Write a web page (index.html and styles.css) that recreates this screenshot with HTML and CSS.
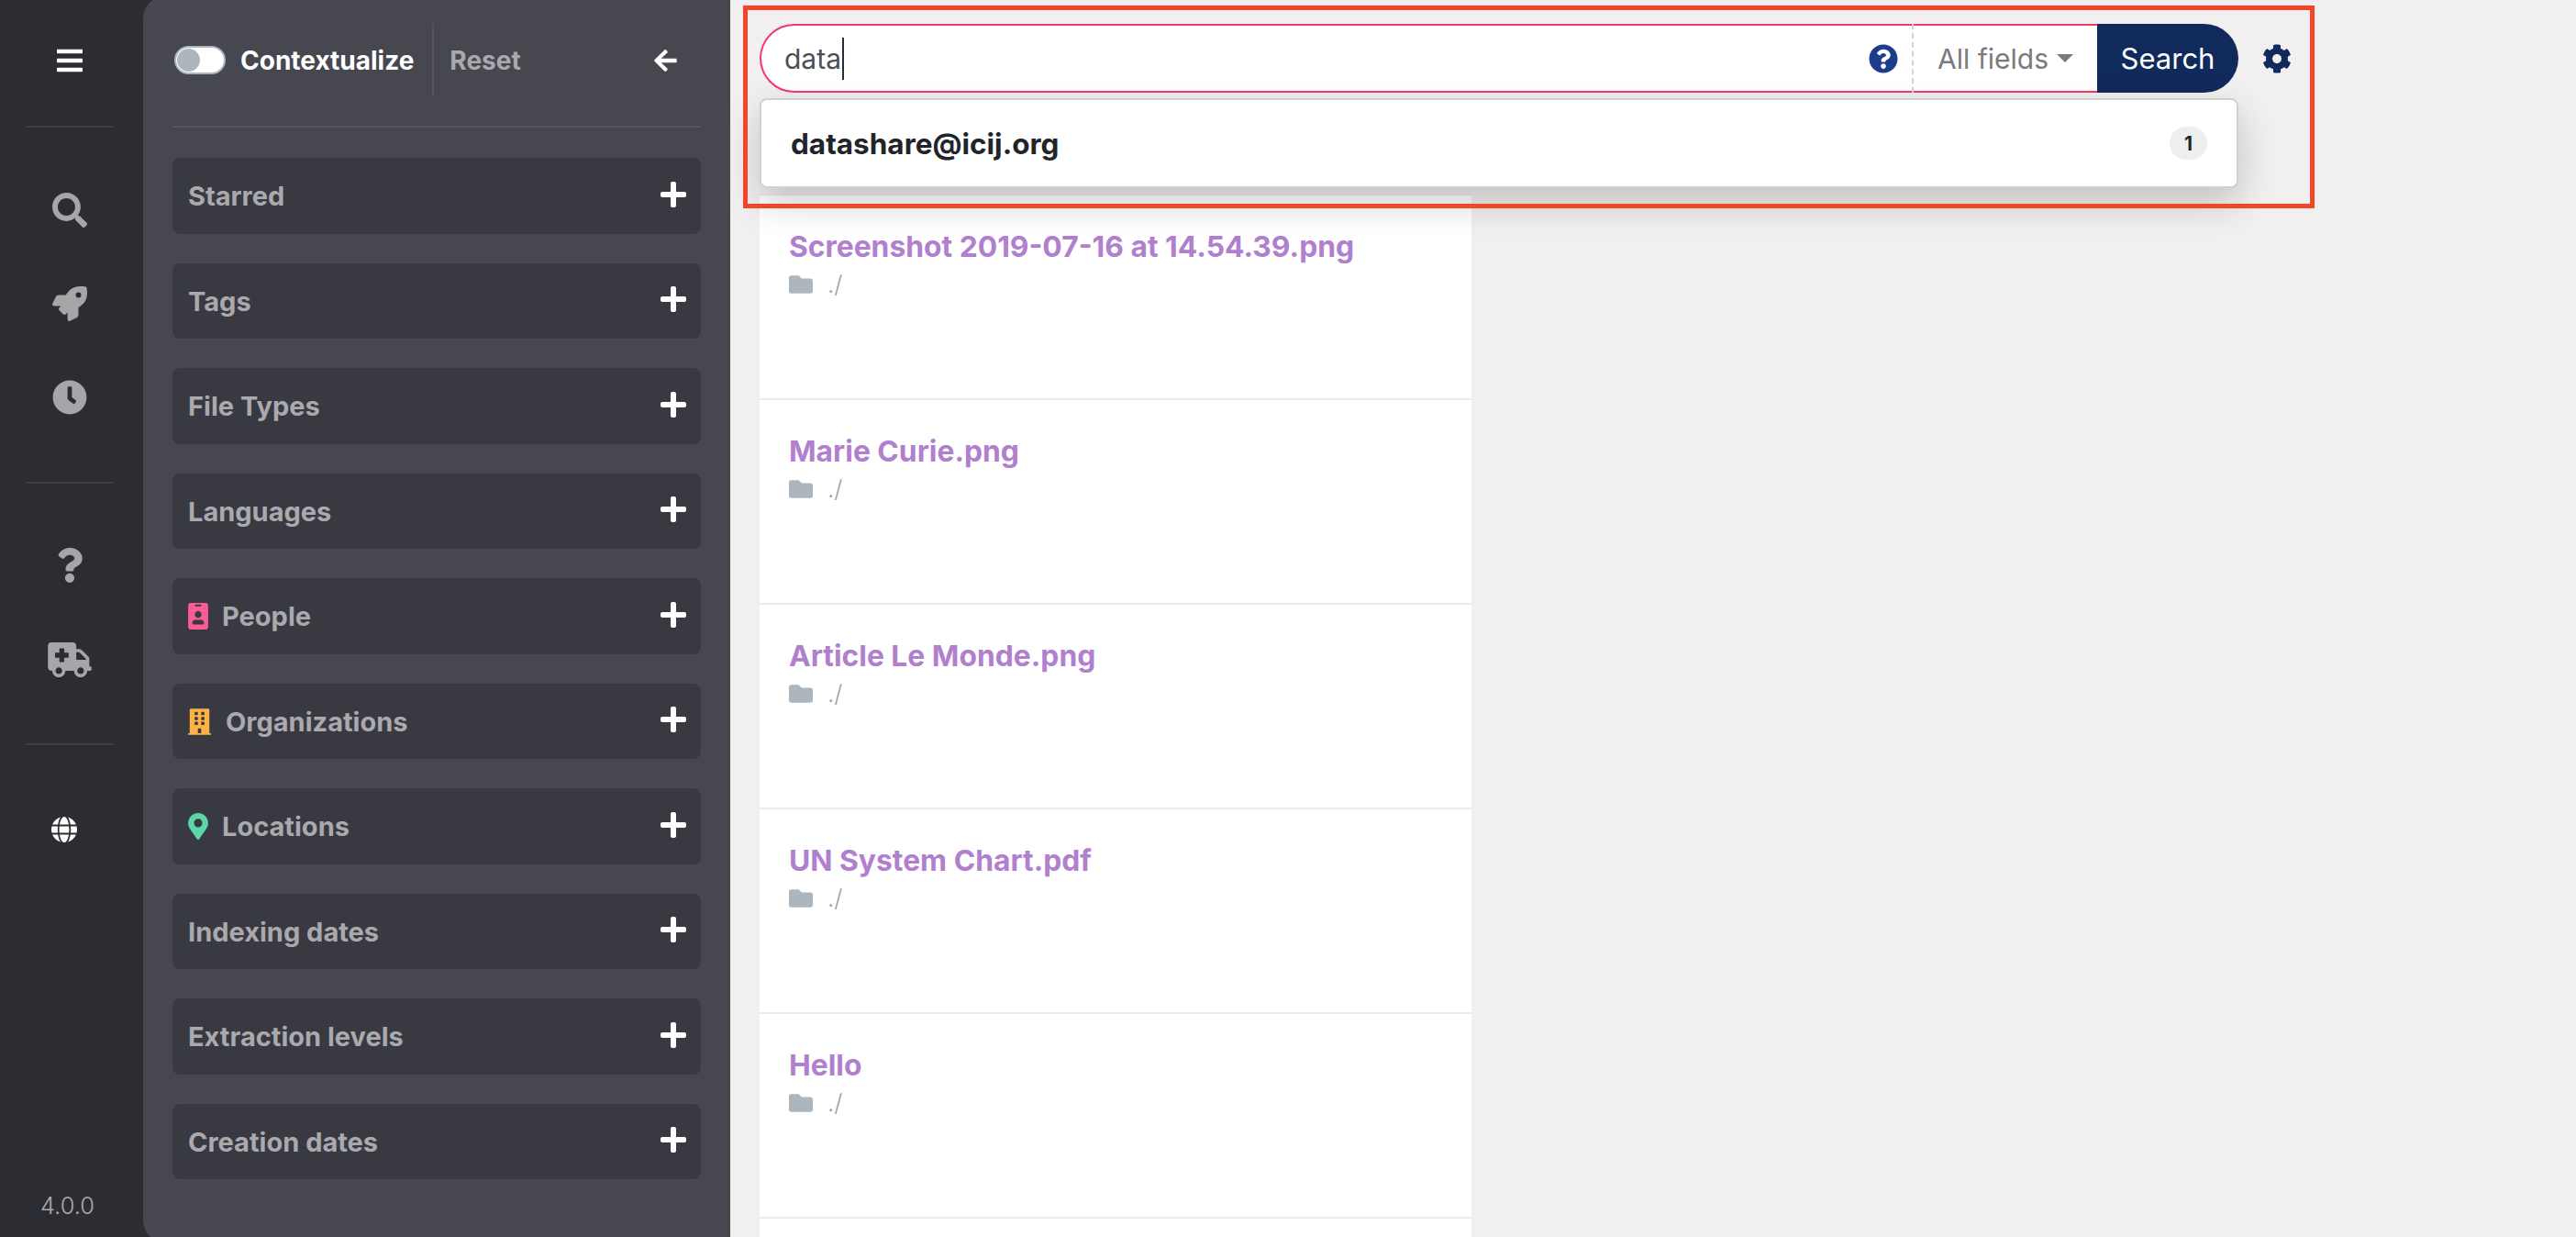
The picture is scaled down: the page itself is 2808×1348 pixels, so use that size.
FILE: index.html
```html
<!DOCTYPE html>
<html lang="en">

<head>
	<meta charset="UTF-8">
	<title>Datashare</title>
	<link rel="stylesheet" href="styles.css">
</head>

<body>
	<svg class="sprites" xmlns="http://www.w3.org/2000/svg">
		<symbol id="i-bars" viewBox="0 0 448 512"><path d="M16 132h416c8.837 0 16-7.163 16-16V76c0-8.837-7.163-16-16-16H16C7.163 60 0 67.163 0 76v40c0 8.837 7.163 16 16 16zm0 160h416c8.837 0 16-7.163 16-16v-40c0-8.837-7.163-16-16-16H16c-8.837 0-16 7.163-16 16v40c0 8.837 7.163 16 16 16zm0 160h416c8.837 0 16-7.163 16-16v-40c0-8.837-7.163-16-16-16H16c-8.837 0-16 7.163-16 16v40c0 8.837 7.163 16 16 16z"/></symbol>
		<symbol id="i-search" viewBox="0 0 512 512"><path d="M505 442.7L405.3 343c-4.5-4.5-10.6-7-17-7H372c27.6-35.3 44-79.7 44-128C416 93.1 322.9 0 208 0S0 93.1 0 208s93.1 208 208 208c48.3 0 92.7-16.4 128-44v16.3c0 6.4 2.5 12.5 7 17l99.7 99.7c9.4 9.4 24.6 9.4 33.9 0l28.3-28.3c9.4-9.4 9.4-24.6.1-34zM208 336c-70.7 0-128-57.2-128-128 0-70.7 57.2-128 128-128 70.7 0 128 57.2 128 128 0 70.7-57.2 128-128 128z"/></symbol>
		<symbol id="i-rocket" viewBox="0 0 512 512"><path d="M505.12019,19.09375c-1.18945-5.53125-6.65819-11-12.207-12.1875C460.716,0,435.507,0,410.40747,0,307.17523,0,245.26909,55.20312,199.05238,128H94.83772c-16.34763.01562-35.55658,11.875-42.88664,26.48438L2.51562,253.29688A28.4,28.4,0,0,0,0,264a24.00867,24.00867,0,0,0,24.00582,24H127.81618l-22.47457,22.46875c-11.36521,11.36133-12.99607,32.25781,0,45.25L156.24582,406.625c11.15623,11.1875,32.15619,13.15625,45.27726,0l22.47457-22.46875V488a24.00867,24.00867,0,0,0,24.00581,24,28.55934,28.55934,0,0,0,10.707-2.51562l98.72834-49.39063c14.62888-7.29687,26.50776-26.5,26.50776-42.85937V312.79688c72.59753-46.3125,128.03493-108.40626,128.03493-211.09376C512.07526,76.5,512.07526,51.29688,505.12019,19.09375ZM384.04033,168A40,40,0,1,1,424.05,128,40.02322,40.02322,0,0,1,384.04033,168Z"/></symbol>
		<symbol id="i-clock" viewBox="0 0 512 512"><path d="M256,8C119,8,8,119,8,256S119,504,256,504,504,393,504,256,393,8,256,8Zm92.49,313h0l-20,25a16,16,0,0,1-22.49,2.5h0l-67-49.72a40,40,0,0,1-15-31.23V112a16,16,0,0,1,16-16h32a16,16,0,0,1,16,16V256l58,42.5A16,16,0,0,1,348.49,321Z"/></symbol>
		<symbol id="i-question" viewBox="0 0 384 512"><path d="M202.021 0C122.202 0 70.503 32.703 29.914 91.026c-7.363 10.58-5.093 25.086 5.178 32.874l43.138 32.709c10.373 7.865 25.132 6.026 33.253-4.148 25.049-31.381 43.63-49.449 82.757-49.449 30.764 0 68.816 19.799 68.816 49.631 0 22.552-18.617 34.134-48.993 51.164-35.423 19.86-82.299 44.576-82.299 106.405V320c0 13.255 10.745 24 24 24h72.471c13.255 0 24-10.745 24-24v-5.773c0-42.86 125.268-44.645 125.268-160.627C377.504 66.256 286.902 0 202.021 0zM192 373.459c-38.196 0-69.271 31.075-69.271 69.271 0 38.195 31.075 69.27 69.271 69.27s69.271-31.075 69.271-69.271-31.075-69.27-69.271-69.27z"/></symbol>
		<symbol id="i-ambulance" viewBox="0 0 640 512"><path d="M624 352h-16V243.9c0-12.7-5.1-24.9-14.1-33.9L494 110.1c-9-9-21.2-14.1-33.9-14.1H416V48c0-26.5-21.5-48-48-48H48C21.5 0 0 21.5 0 48v320c0 26.5 21.5 48 48 48h16c0 53 43 96 96 96s96-43 96-96h128c0 53 43 96 96 96s96-43 96-96h48c8.8 0 16-7.2 16-16v-32c0-8.8-7.2-16-16-16zM160 464c-26.5 0-48-21.5-48-48s21.5-48 48-48 48 21.5 48 48-21.5 48-48 48zm144-248c0 4.4-3.6 8-8 8h-56v56c0 4.4-3.6 8-8 8h-56c-4.4 0-8-3.6-8-8v-56h-56c-4.4 0-8-3.6-8-8v-56c0-4.4 3.6-8 8-8h56v-56c0-4.4 3.6-8 8-8h56c4.4 0 8 3.6 8 8v56h56c4.4 0 8 3.6 8 8v56zm176 248c-26.5 0-48-21.5-48-48s21.5-48 48-48 48 21.5 48 48-21.5 48-48 48zm80-208H416V144h44.1l99.9 99.9V256z"/></symbol>
		<symbol id="i-globe" viewBox="0 0 496 512"><path d="M336.5 160C322 70.7 287.8 8 248 8s-74 62.7-88.5 152h177zM152 256c0 22.2 1.2 43.5 3.3 64h185.3c2.1-20.5 3.3-41.8 3.3-64s-1.2-43.5-3.3-64H155.3c-2.1 20.5-3.3 41.8-3.3 64zm324.7-96c-28.6-67.9-86.5-120.4-158-141.6 24.4 33.8 41.2 84.7 50 141.6h108zM177.2 18.4C105.8 39.6 47.8 92.1 19.3 160h108c8.7-56.9 25.5-107.8 49.9-141.6zM487.4 192H372.7c2.1 21 3.3 42.5 3.3 64s-1.2 43-3.3 64h114.6c5.5-20.5 8.6-41.8 8.6-64s-3.1-43.5-8.5-64zM120 256c0-21.5 1.2-43 3.3-64H8.6C3.2 212.5 0 233.8 0 256s3.2 43.5 8.6 64h114.6c-2-21-3.2-42.5-3.2-64zm39.5 96c14.5 89.3 48.7 152 88.5 152s74-62.7 88.5-152h-177zm159.3 141.6c71.4-21.2 129.4-73.7 158-141.6h-108c-8.8 56.9-25.6 107.8-50 141.6zM19.3 352c28.6 67.9 86.5 120.4 158 141.6-24.4-33.8-41.2-84.7-50-141.6h-108z"/></symbol>
		<symbol id="i-arrow" viewBox="0 0 448 512"><path d="M257.5 445.1l-22.2 22.2c-9.4 9.4-24.6 9.4-33.9 0L7 273c-9.4-9.4-9.4-24.6 0-33.9L201.4 44.7c9.4-9.4 24.6-9.4 33.9 0l22.2 22.2c9.5 9.5 9.3 25-.4 34.3L136.6 216H424c13.3 0 24 10.7 24 24v32c0 13.3-10.7 24-24 24H136.6l120.5 114.8c9.8 9.3 10 24.8.4 34.3z"/></symbol>
		<symbol id="i-plus" viewBox="0 0 448 512"><path d="M416 208H272V64c0-17.67-14.33-32-32-32h-32c-17.67 0-32 14.33-32 32v144H32c-17.67 0-32 14.33-32 32v32c0 17.67 14.33 32 32 32h144v144c0 17.67 14.33 32 32 32h32c17.67 0 32-14.33 32-32V304h144c17.67 0 32-14.33 32-32v-32c0-17.67-14.33-32-32-32z"/></symbol>
		<symbol id="i-badge" viewBox="0 0 384 512"><path d="M336 0H48C21.5 0 0 21.5 0 48v416c0 26.5 21.5 48 48 48h288c26.5 0 48-21.5 48-48V48c0-26.5-21.5-48-48-48zM144 32h96c8.8 0 16 7.2 16 16s-7.2 16-16 16h-96c-8.8 0-16-7.2-16-16s7.2-16 16-16zm48 128c35.3 0 64 28.7 64 64s-28.7 64-64 64-64-28.7-64-64 28.7-64 64-64zm112 236.8c0 10.6-10 19.2-22.4 19.2H102.4C90 416 80 407.4 80 396.8v-19.2c0-31.8 30.1-57.6 67.2-57.6h5c12.3 5.1 25.7 8 39.8 8s27.6-2.9 39.8-8h5c37.1 0 67.2 25.8 67.2 57.6v19.2z"/></symbol>
		<symbol id="i-building" viewBox="0 0 448 512"><path d="M436 480h-20V24c0-13.255-10.745-24-24-24H56C42.745 0 32 10.745 32 24v456H12c-6.627 0-12 5.373-12 12v20h448v-20c0-6.627-5.373-12-12-12zM128 76c0-6.627 5.373-12 12-12h40c6.627 0 12 5.373 12 12v40c0 6.627-5.373 12-12 12h-40c-6.627 0-12-5.373-12-12V76zm0 96c0-6.627 5.373-12 12-12h40c6.627 0 12 5.373 12 12v40c0 6.627-5.373 12-12 12h-40c-6.627 0-12-5.373-12-12v-40zm52 148h-40c-6.627 0-12-5.373-12-12v-40c0-6.627 5.373-12 12-12h40c6.627 0 12 5.373 12 12v40c0 6.627-5.373 12-12 12zm76 160h-64v-84c0-6.627 5.373-12 12-12h40c6.627 0 12 5.373 12 12v84zm64-172c0 6.627-5.373 12-12 12h-40c-6.627 0-12-5.373-12-12v-40c0-6.627 5.373-12 12-12h40c6.627 0 12 5.373 12 12v40zm0-96c0 6.627-5.373 12-12 12h-40c-6.627 0-12-5.373-12-12v-40c0-6.627 5.373-12 12-12h40c6.627 0 12 5.373 12 12v40zm0-96c0 6.627-5.373 12-12 12h-40c-6.627 0-12-5.373-12-12V76c0-6.627 5.373-12 12-12h40c6.627 0 12 5.373 12 12v40z"/></symbol>
		<symbol id="i-marker" viewBox="0 0 384 512"><path d="M172.268 501.67C26.97 291.031 0 268.413 0 192 0 85.961 85.961 0 192 0s192 85.961 192 192c0 76.413-26.97 99.031-172.268 309.67-9.535 13.774-29.93 13.773-39.464 0zM192 272c44.183 0 80-35.817 80-80s-35.817-80-80-80-80 35.817-80 80 35.817 80 80 80z"/></symbol>
		<symbol id="i-folder" viewBox="0 0 512 512"><path d="M464 128H272l-64-64H48C21.49 64 0 85.49 0 112v288c0 26.51 21.49 48 48 48h416c26.51 0 48-21.49 48-48V176c0-26.51-21.49-48-48-48z"/></symbol>
		<symbol id="i-help" viewBox="0 0 512 512"><path d="M504 256c0 136.997-111.043 248-248 248S8 392.997 8 256C8 119.083 119.043 8 256 8s248 111.083 248 248zM262.655 90c-54.497 0-89.255 22.957-116.549 63.758-3.536 5.286-2.353 12.415 2.715 16.258l34.699 26.31c5.205 3.947 12.621 3.008 16.665-2.122 17.864-22.658 30.113-35.797 57.303-35.797 20.429 0 45.698 13.148 45.698 32.958 0 14.976-12.363 22.667-32.534 33.976C247.128 238.528 216 254.941 216 296v4c0 6.627 5.373 12 12 12h56c6.627 0 12-5.373 12-12v-1.333c0-28.462 83.186-29.647 83.186-106.667 0-58.002-60.165-102-116.531-102zM256 338c-25.365 0-46 20.635-46 46 0 25.364 20.635 46 46 46s46-20.636 46-46c0-25.365-20.635-46-46-46z"/></symbol>
		<symbol id="i-cog" viewBox="0 0 512 512"><path d="M487.4 315.7l-42.6-24.6c4.3-23.2 4.3-47 0-70.2l42.6-24.6c4.9-2.8 7.1-8.6 5.5-14-11.1-35.6-30-67.8-54.7-94.6-3.8-4.1-10-5.1-14.8-2.3L380.8 110c-17.9-15.4-38.5-27.3-60.8-35.1V25.8c0-5.6-3.9-10.5-9.4-11.7-36.7-8.2-74.3-7.8-109.2 0-5.5 1.2-9.4 6.1-9.4 11.7V75c-22.2 7.9-42.8 19.8-60.8 35.1L88.7 85.5c-4.9-2.8-11-1.9-14.8 2.3-24.7 26.7-43.6 58.9-54.7 94.6-1.7 5.4.6 11.2 5.5 14L67.3 221c-4.3 23.2-4.3 47 0 70.2l-42.6 24.6c-4.9 2.8-7.1 8.6-5.5 14 11.1 35.6 30 67.8 54.7 94.6 3.8 4.1 10 5.1 14.8 2.3l42.6-24.6c17.9 15.4 38.5 27.3 60.8 35.1v49.2c0 5.6 3.9 10.5 9.4 11.7 36.7 8.2 74.3 7.8 109.2 0 5.5-1.2 9.4-6.1 9.4-11.7v-49.2c22.2-7.9 42.8-19.8 60.8-35.1l42.6 24.6c4.9 2.8 11 1.9 14.8-2.3 24.7-26.7 43.6-58.9 54.7-94.6 1.5-5.5-.7-11.3-5.6-14.1zM256 336c-44.1 0-80-35.9-80-80s35.9-80 80-80 80 35.9 80 80-35.9 80-80 80z"/></symbol>
	</svg>

	<nav class="rail">
		<div class="rail-group rail-top">
			<svg class="rail-bars"><use href="#i-bars"/></svg>
		</div>
		<div class="rail-group rail-main">
			<svg class="rail-icon"><use href="#i-search"/></svg>
			<svg class="rail-icon"><use href="#i-rocket"/></svg>
			<svg class="rail-icon"><use href="#i-clock"/></svg>
		</div>
		<div class="rail-group rail-help">
			<svg class="rail-icon"><use href="#i-question"/></svg>
			<svg class="rail-icon rail-ambulance"><use href="#i-ambulance"/></svg>
		</div>
		<div class="rail-lang">
			<svg class="rail-globe"><use href="#i-globe"/></svg>
		</div>
		<div class="rail-version">4.0.0</div>
	</nav>

	<aside class="panel">
		<div class="panel-head">
			<span class="toggle"><span class="toggle-knob"></span></span>
			<span class="context-label">Contextualize</span>
			<span class="reset">Reset</span>
			<svg class="back"><use href="#i-arrow"/></svg>
		</div>
		<div class="filters">
			<div class="filter"><span>Starred</span><svg class="plus"><use href="#i-plus"/></svg></div>
			<div class="filter"><span>Tags</span><svg class="plus"><use href="#i-plus"/></svg></div>
			<div class="filter"><span>File Types</span><svg class="plus"><use href="#i-plus"/></svg></div>
			<div class="filter"><span>Languages</span><svg class="plus"><use href="#i-plus"/></svg></div>
			<div class="filter"><svg class="ftype ftype-person"><use href="#i-badge"/></svg><span>People</span><svg class="plus"><use href="#i-plus"/></svg></div>
			<div class="filter"><svg class="ftype ftype-org"><use href="#i-building"/></svg><span>Organizations</span><svg class="plus"><use href="#i-plus"/></svg></div>
			<div class="filter"><svg class="ftype ftype-loc"><use href="#i-marker"/></svg><span>Locations</span><svg class="plus"><use href="#i-plus"/></svg></div>
			<div class="filter"><span>Indexing dates</span><svg class="plus"><use href="#i-plus"/></svg></div>
			<div class="filter"><span>Extraction levels</span><svg class="plus"><use href="#i-plus"/></svg></div>
			<div class="filter"><span>Creation dates</span><svg class="plus"><use href="#i-plus"/></svg></div>
		</div>
	</aside>

	<main class="content">
		<div class="search-row">
			<div class="search-box">
				<div class="search-input"><span class="typed">data</span></div>
				<svg class="help"><use href="#i-help"/></svg>
				<div class="field-select">All fields<span class="caret"></span></div>
			</div>
			<div class="search-btn">Search</div>
			<svg class="settings"><use href="#i-cog"/></svg>
		</div>

		<div class="results">
			<div class="result">
				<div class="result-title">Screenshot 2019-07-16 at 14.54.39.png</div>
				<div class="result-path"><svg class="folder"><use href="#i-folder"/></svg>./</div>
			</div>
			<div class="result">
				<div class="result-title">Marie Curie.png</div>
				<div class="result-path"><svg class="folder"><use href="#i-folder"/></svg>./</div>
			</div>
			<div class="result">
				<div class="result-title">Article Le Monde.png</div>
				<div class="result-path"><svg class="folder"><use href="#i-folder"/></svg>./</div>
			</div>
			<div class="result">
				<div class="result-title">UN System Chart.pdf</div>
				<div class="result-path"><svg class="folder"><use href="#i-folder"/></svg>./</div>
			</div>
			<div class="result">
				<div class="result-title">Hello</div>
				<div class="result-path"><svg class="folder"><use href="#i-folder"/></svg>./</div>
			</div>
		</div>

		<div class="suggestions">
			<span class="suggestion-text">datashare@icij.org</span>
			<span class="suggestion-count">1</span>
		</div>
	</main>

	<div class="highlight"></div>
</body>
</html>
```

FILE: styles.css
```css
* {
	box-sizing: border-box;
}

html, body {
	height: 100%;
}

body {
	margin: 0;
	display: flex;
	overflow: hidden;
	font-family: Inter, "Liberation Sans", sans-serif;
	background-color: #f2eff0;
}

.sprites {
	display: none;
}

svg {
	fill: currentColor;
	flex: none;
}

/* left rail */
.rail {
	width: 156px;
	flex: none;
	padding-right: 4px;
	display: flex;
	flex-direction: column;
	align-items: center;
	background-color: #2c2d32;
	color: #a6a6a9;
}

.rail-group {
	width: 96px;
	display: flex;
	flex-direction: column;
	align-items: center;
	border-bottom: 2px solid #3f4046;
}

.rail-top {
	height: 139px;
	padding-top: 50px;
}

.rail-bars {
	width: 28px;
	height: 32px;
	color: #fff;
}

.rail-main {
	height: 388px;
	padding-top: 71px;
	gap: 64px;
}

.rail-help {
	height: 285px;
	padding-top: 70px;
	gap: 65px;
}

.rail-icon {
	width: 38px;
	height: 38px;
}

.rail-ambulance {
	width: 48px;
}

.rail-lang {
	margin-top: 76px;
	margin-left: -12px;
	color: #fff;
}

.rail-globe {
	display: block;
	width: 28px;
	height: 32px;
}

.rail-version {
	margin-top: auto;
	margin-bottom: 19px;
	margin-left: -5px;
	font-size: 25.5px;
	font-weight: 300;
	color: #a9a9ac;
}

/* filters panel, its rounded corners are cut a little by the window */
.panel {
	width: 640px;
	flex: none;
	margin: -4px 0 -6px;
	padding: 0 32px;
	background-color: #47474f;
	border-radius: 24px 0 0 24px;
	box-shadow: -30px 0 0 #2c2d32;
}

.panel-head {
	height: 143px;
	padding: 30px 0 32px;
	display: flex;
	align-items: center;
	border-bottom: 2px solid #55555e;
}

.toggle {
	width: 56px;
	height: 31px;
	margin-left: 2px;
	padding: 1px;
	background-color: #fff;
	border: 2px solid #adb5bd;
	border-radius: 16px;
}

.toggle-knob {
	display: block;
	width: 25px;
	height: 25px;
	background-color: #adb5bd;
	border-radius: 50%;
}

.context-label {
	margin-left: 16px;
	padding-right: 20px;
	height: 80px;
	line-height: 80px;
	font-size: 28px;
	font-weight: 700;
	color: #fff;
	border-right: 2px solid #55555e;
}

.reset {
	margin-left: 17px;
	font-size: 28px;
	font-weight: 700;
	color: #a9a9ae;
}

.back {
	width: 25px;
	height: 28px;
	margin-left: auto;
	margin-right: 26px;
	color: #fff;
}

.filters {
	padding-top: 33px;
	display: flex;
	flex-direction: column;
	gap: 32px;
}

.filter {
	height: 82.5px;
	padding: 1px 16px 0 17px;
	display: flex;
	align-items: center;
	background-color: #393941;
	border-radius: 8px;
	font-size: 29px;
	font-weight: 700;
	color: #a9a9ae;
}

.ftype {
	height: 29px;
	width: 22px;
	margin-right: 15px;
}

.ftype-person {
	color: #fc5c93;
}

.ftype-org {
	width: 25px;
	margin-right: 16px;
	color: #fdb245;
}

.ftype-loc {
	color: #5bd6a6;
}

.plus {
	width: 28px;
	height: 32px;
	margin-left: auto;
	margin-top: -4px;
	color: #fff;
}

/* search and results */
.content {
	position: relative;
	flex: 1;
	height: 100%;
	padding-left: 32px;
	overflow: hidden;
}

.search-row {
	height: 211px;
	padding-top: 26px;
	display: flex;
	align-items: flex-start;
}

.search-box {
	width: 1458px;
	height: 75px;
	display: flex;
	align-items: center;
	background-color: #fff;
	border: 2px solid #f5386c;
	border-right: none;
	border-radius: 38px 0 0 38px;
}

.search-input {
	flex: 1;
	padding-left: 25px;
	font-size: 30px;
	color: #495057;
}

.typed {
	padding-right: 1px;
	padding-top: 5px;
	padding-bottom: 5px;
	border-right: 2px solid #2c2d32;
}

.help {
	width: 32px;
	height: 32px;
	color: #1c3d8c;
}

.field-select {
	width: 202px;
	height: 75px;
	margin: -2px 0 -2px 15px;
	padding-left: 26px;
	display: flex;
	align-items: center;
	font-size: 30px;
	color: #7a7a7a;
	border-left: 2px dashed #ced4da;
}

.caret {
	margin-left: 9px;
	border-top: 9px solid #7a7a7a;
	border-left: 9px solid transparent;
	border-right: 9px solid transparent;
}

.search-btn {
	width: 154px;
	height: 75px;
	display: flex;
	align-items: center;
	justify-content: center;
	background-color: #112a5c;
	color: #fff;
	font-size: 31px;
	border-radius: 0 38px 38px 0;
}

.settings {
	width: 32px;
	height: 32px;
	margin: 22px 0 0 26px;
	color: #112a5c;
}

.results {
	width: 776px;
	height: 1137px;
	background-color: #fff;
	border-top: 2px solid #e9ecef;
}

.result {
	height: 223px;
	padding: 36px 32px 0;
	border-bottom: 2px solid #e9ecef;
}

.result-title {
	font-size: 31.8px;
	font-weight: 700;
	color: #b07fcd;
}

.result-path {
	margin-top: 6px;
	display: flex;
	align-items: center;
	font-size: 26px;
	font-weight: 300;
	color: #9aa3aa;
}

.folder {
	width: 26px;
	height: 26px;
	margin-right: 16px;
	color: #adb5bd;
}

.suggestions {
	position: absolute;
	top: 107px;
	left: 32px;
	width: 1612px;
	height: 98px;
	padding: 0 32px;
	display: flex;
	align-items: center;
	justify-content: space-between;
	background-color: #fff;
	border: 2px solid #d0d0d0;
	border-radius: 8px;
	box-shadow: 0 16px 40px rgba(0, 0, 0, 0.2);
}

.suggestion-text {
	font-size: 31.5px;
	font-weight: 700;
	color: #212529;
}

.suggestion-count {
	width: 41px;
	height: 36px;
	display: flex;
	align-items: center;
	justify-content: center;
	background-color: #eeeeee;
	border-radius: 18px;
	font-size: 21px;
	font-weight: 700;
	color: #212529;
}

.highlight {
	position: absolute;
	top: 6px;
	left: 810px;
	width: 1713px;
	height: 221px;
	border: 5px solid #f24726;
	pointer-events: none;
}
```
